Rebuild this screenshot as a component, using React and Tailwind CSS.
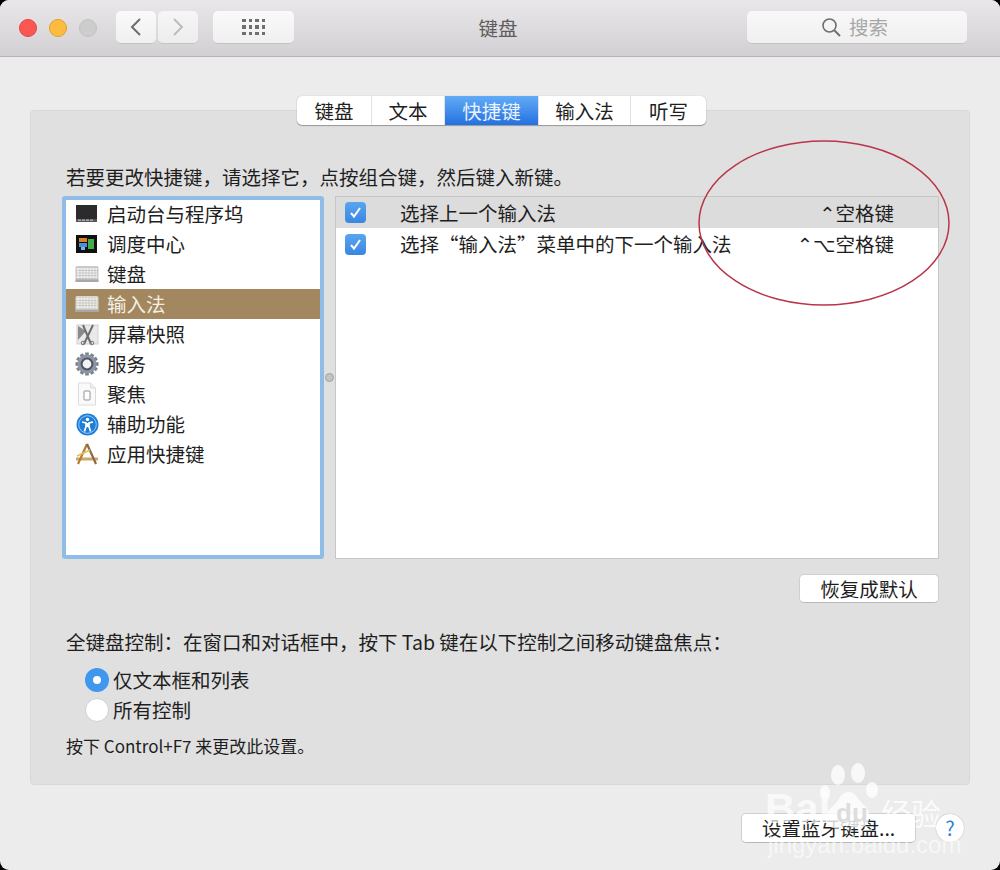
import React from "react";

const FONT = { fontFamily: '"Noto Sans CJK SC", "DejaVu Sans", sans-serif' };

function LaunchIcon() {
  return (
    <svg width="22" height="18" viewBox="0 0 22 18">
      <rect x="0" y="0" width="21" height="17" fill="#2b2b2d" />
      <rect x="0" y="14" width="21" height="3" fill="#555" />
      <path d="M2 14.5h3v1.5h-3zM6 14.5h3v1.5h-3zM10 14.5h3v1.5h-3zM14 14.5h3v1.5h-3z" fill="#aaa" />
    </svg>
  );
}

function MissionIcon() {
  return (
    <svg width="22" height="18" viewBox="0 0 22 18">
      <rect width="21" height="18" fill="#101010" />
      <rect x="3" y="3" width="8" height="4" fill="#d9822b" />
      <rect x="3" y="8" width="8" height="4" fill="#4a90d9" />
      <rect x="5" y="12" width="4" height="3" fill="#79b3e8" />
      <rect x="12" y="4" width="6" height="10" fill="#3fae49" />
    </svg>
  );
}

function KeyboardIcon({ light }) {
  return (
    <svg width="24" height="18" viewBox="0 0 24 18">
      <rect x="0.5" y="1" width="23" height="16" rx="1.5" fill={light ? "#d9d6d0" : "#c9c9c9"} />
      <rect x="2" y="3" width="20" height="10" fill={light ? "#f2f0ec" : "#f1f1f1"} />
      <path d="M2 5.5h20M2 8h20M2 10.5h20M5 3v10M8 3v10M11 3v10M14 3v10M17 3v10M20 3v10" stroke="#b5b5b5" strokeWidth="0.6" />
      <rect x="0.5" y="14.5" width="23" height="2.5" fill="#a8a8a8" />
    </svg>
  );
}

function ScreenshotIcon() {
  return (
    <svg width="23" height="23" viewBox="0 0 23 23">
      <rect x="1" y="2" width="21" height="19" fill="#e9e9e9" stroke="#cfcfcf" />
      <path d="M2 3l8 5-8 9z" fill="#8a8a8a" />
      <path d="M7 2l8 19M17 2L8 21" stroke="#6e6e6e" strokeWidth="2" />
      <circle cx="7" cy="20" r="1.8" fill="none" stroke="#777" />
      <circle cx="16" cy="20" r="1.8" fill="none" stroke="#777" />
    </svg>
  );
}

function GearIcon() {
  const teeth = [0, 30, 60, 90, 120, 150];
  return (
    <svg width="24" height="24" viewBox="0 0 24 24">
      {teeth.map((a) => (
        <rect key={a} x="10.2" y="0.5" width="3.6" height="23" fill="#77808c" transform={`rotate(${a} 12 12)`} />
      ))}
      <circle cx="12" cy="12" r="9.5" fill="#8d96a2" />
      <circle cx="12" cy="12" r="6.4" fill="#4d5560" />
      <circle cx="12" cy="12" r="4.4" fill="#f3f3f3" />
    </svg>
  );
}

function FocusIcon() {
  return (
    <svg width="20" height="24" viewBox="0 0 20 24">
      <path d="M1.5 1h12l5 5v17h-17z" fill="#fafafa" stroke="#dcdcdc" />
      <path d="M13.5 1v5h5" fill="#eee" stroke="#dcdcdc" />
      <rect x="7" y="9" width="6" height="9" rx="0.8" fill="#fff" stroke="#777" strokeWidth="0.8" />
    </svg>
  );
}

function AccessIcon() {
  return (
    <svg width="23" height="23" viewBox="0 0 23 23">
      <circle cx="11.5" cy="11.5" r="11" fill="#1c7ed6" />
      <circle cx="11.5" cy="11.5" r="8.8" fill="none" stroke="#cfe6fa" strokeWidth="0.7" />
      <circle cx="11.5" cy="6.4" r="1.7" fill="#fff" />
      <path d="M6 9l4 1v3.5l-1.6 5M17 9l-4 1v3.5l1.6 5M11.5 10v4" stroke="#fff" strokeWidth="1.7" fill="none" />
    </svg>
  );
}

function AppIcon() {
  return (
    <svg width="24" height="24" viewBox="0 0 24 24">
      <path d="M1 17h22" stroke="#c9a96a" strokeWidth="3" />
      <path d="M12 2L3 22" stroke="#b77a35" strokeWidth="2.2" />
      <path d="M12 2l9 20" stroke="#8a6a45" strokeWidth="2.2" />
      <path d="M2 14l13-6" stroke="#e0c050" strokeWidth="1.6" />
    </svg>
  );
}

const sidebarItems = [
  { label: "启动台与程序坞", icon: <LaunchIcon /> },
  { label: "调度中心", icon: <MissionIcon /> },
  { label: "键盘", icon: <KeyboardIcon /> },
  { label: "输入法", icon: <KeyboardIcon light />, selected: true },
  { label: "屏幕快照", icon: <ScreenshotIcon /> },
  { label: "服务", icon: <GearIcon /> },
  { label: "聚焦", icon: <FocusIcon /> },
  { label: "辅助功能", icon: <AccessIcon /> },
  { label: "应用快捷键", icon: <AppIcon /> },
];

const tabs = [
  { label: "键盘", w: "w-[75px]" },
  { label: "文本", w: "w-[73px]" },
  { label: "快捷键", w: "w-[94px]", active: true },
  { label: "输入法", w: "w-[92px]" },
  { label: "听写", w: "w-[75px]" },
];

function Check() {
  return (
    <span className="flex h-[21px] w-[21px] items-center justify-center rounded-[4px] bg-gradient-to-b from-[#5aa5f0] to-[#3a86e2]">
      <svg width="15" height="15" viewBox="0 0 15 15">
        <path d="M3 8l3 3.5L12 3" stroke="#fff" strokeWidth="2" fill="none" />
      </svg>
    </span>
  );
}

function ShortcutRow({ label, keys, shaded, h }) {
  return (
    <div className={`flex items-center pl-[9px] pr-[44px] ${h} ${shaded ? "bg-[#dcdcdc]" : ""}`}>
      <Check />
      <span className="ml-[34px] flex-1">{label}</span>
      <span>{keys}</span>
    </div>
  );
}

function Paw() {
  return (
    <svg width="62" height="72" viewBox="0 0 62 72" fill="#ffffff">
      <ellipse cx="18" cy="13" rx="7" ry="10" />
      <ellipse cx="38" cy="11" rx="7" ry="10" />
      <ellipse cx="5" cy="31" rx="5" ry="8" />
      <ellipse cx="52" cy="28" rx="6" ry="8" />
      <path d="M28 30c8 0 10 8 17 14 8 7 5 22-6 22-5 0-8-2-12-2s-7 3-13 2C4 65 3 52 12 45c7-5 8-15 16-15z" />
    </svg>
  );
}

export default function App() {
  return (
    <div className="h-[870px] w-[1000px] bg-black" style={FONT}>
      <div className="relative flex h-full flex-col overflow-hidden rounded-[9px] bg-[#ececec] text-[19.5px] leading-[28px] text-[#1e1e1e]">
        {/* titlebar */}
        <div className="flex h-[57px] shrink-0 items-center border-b border-[#b4b2b4] bg-gradient-to-b from-[#e9e7e9] to-[#d2d0d2] pb-[1px]">
          <div className="ml-[19px] flex gap-[12px]">
            <span className="h-[18px] w-[18px] rounded-full border border-[#e0443e] bg-[#fc5753]" />
            <span className="h-[18px] w-[18px] rounded-full border border-[#dea123] bg-[#fdbc40]" />
            <span className="h-[18px] w-[18px] rounded-full border border-[#c2c2c2] bg-[#cdcdcd]" />
          </div>
          <div className="ml-[19px] flex gap-[2px]">
            <div className="flex h-[33px] w-[40px] items-center justify-center rounded-[5px] border-b border-[#c4c2c4] bg-gradient-to-b from-[#fafafa] to-[#f0f0f0]">
              <svg width="14" height="20" viewBox="0 0 14 20">
                <path d="M11 2L3 10l8 8" stroke="#6e6e6e" strokeWidth="2" fill="none" />
              </svg>
            </div>
            <div className="flex h-[33px] w-[40px] items-center justify-center rounded-[5px] border-b border-[#c4c2c4] bg-gradient-to-b from-[#f6f6f6] to-[#ededed]">
              <svg width="14" height="20" viewBox="0 0 14 20">
                <path d="M3 2l8 8-8 8" stroke="#bcbcbc" strokeWidth="2" fill="none" />
              </svg>
            </div>
          </div>
          <div className="ml-[15px] flex h-[33px] w-[81px] items-center justify-center rounded-[5px] border-b border-[#c4c2c4] bg-gradient-to-b from-[#fafafa] to-[#f0f0f0]">
            <div className="grid grid-cols-4 gap-x-[3px] gap-y-[3px]">
              {Array.from({ length: 12 }).map((_, i) => (
                <span key={i} className="h-[3.5px] w-[3.5px] bg-[#6f6f6f]" />
              ))}
            </div>
          </div>
          <div className="ml-[184px] w-[40px] text-center text-[#5c5c5c]">键盘</div>
          <div className="ml-[229px] flex h-[33px] w-[220px] items-center rounded-[5px] border-b border-[#c4c2c4] bg-gradient-to-b from-[#f8f8f8] to-[#f0f0f0] pl-[74px]">
            <svg width="20" height="20" viewBox="0 0 20 20">
              <circle cx="8.5" cy="8.5" r="6.5" stroke="#6f6f6f" strokeWidth="1.6" fill="none" />
              <path d="M13.5 13.5L19 19" stroke="#6f6f6f" strokeWidth="2" />
            </svg>
            <span className="ml-[8px] text-[#a8a8a8]">搜索</span>
          </div>
        </div>

        {/* body */}
        <div className="flex flex-1 flex-col px-[30px] pt-[53px]">
          <div className="flex h-[675px] shrink-0 flex-col rounded-[4px] border border-[#d8d8d8] bg-[#e0e0e0] pl-[31px] pr-[30px]">
            <div className="-mt-[15px] flex justify-center pl-[2px]">
              <div className="flex h-[29px] overflow-hidden rounded-[5px] bg-white shadow-[0_1px_1px_rgba(0,0,0,0.3),0_0_1px_rgba(0,0,0,0.3)]">
                {tabs.map((t) => (
                  <div
                    key={t.label}
                    className={`flex items-center justify-center border-r border-[#e2e2e2] last:border-r-0 ${t.w} ${t.active ? "bg-gradient-to-b from-[#62abf6] to-[#2470e0] text-[#eaf3fe]" : ""}`}
                  >
                    {t.label}
                  </div>
                ))}
              </div>
            </div>

            <div className="ml-[4px] mt-[38px] h-[28px]">若要更改快捷键，请选择它，点按组合键，然后键入新键。</div>

            <div className="mt-[5px] flex h-[363px]">
              <div className="w-[262px] shrink-0 rounded-[3px] border-[4px] border-[#8fbde8] bg-white">
                <div className="-mt-[1px]">
                  {sidebarItems.map((item) => (
                    <div
                      key={item.label}
                      className={`flex h-[30px] items-center ${item.selected ? "bg-[#a3885f] text-[#f4efe6]" : ""}`}
                    >
                      <span className="flex w-[41px] shrink-0 items-center justify-center pl-[1px]">{item.icon}</span>
                      {item.label}
                    </div>
                  ))}
                </div>
              </div>
              <div className="flex w-[11px] shrink-0 items-center justify-center pt-[0px]">
                <span className="h-[9px] w-[9px] rounded-full border border-[#a0a0a0] bg-[#c4c4c4]" />
              </div>
              <div className="flex-1 border border-[#c6c6c6] bg-white">
                <ShortcutRow label="选择上一个输入法" keys="⌃空格键" shaded h="h-[31px]" />
                <div className="mt-[1px]">
                  <ShortcutRow label="选择“输入法”菜单中的下一个输入法" keys="⌃⌥空格键" h="h-[30px]" />
                </div>
              </div>
            </div>

            <div className="mt-[15px] flex justify-end">
              <div className="flex h-[29px] w-[140px] items-center justify-center rounded-[5px] border border-[#cfcfcf] border-b-[#b8b8b8] bg-white">
                恢复成默认
              </div>
            </div>

            <div className="ml-[4px] mt-[25px] h-[28px]">全键盘控制：在窗口和对话框中，按下 Tab 键在以下控制之间移动键盘焦点：</div>

            <div className="ml-[23px] mt-[9px] flex h-[30px] items-center">
              <span className="flex h-[24px] w-[24px] items-center justify-center rounded-full bg-[#3f97ee]">
                <span className="h-[8px] w-[8px] rounded-full bg-white" />
              </span>
              <span className="ml-[4px]">仅文本框和列表</span>
            </div>
            <div className="ml-[23px] flex h-[30px] items-center">
              <span className="h-[24px] w-[24px] rounded-full border border-[#cfcfcf] bg-white" />
              <span className="ml-[4px]">所有控制</span>
            </div>

            <div className="ml-[4px] mt-[7px] h-[28px] text-[17px]">按下 Control+F7 来更改此设置。</div>
          </div>

          <div className="mt-[28px] flex items-center">
            <div className="ml-[711px] flex h-[30px] w-[175px] items-center rounded-[5px] border border-[#cfcfcf] border-b-[#b8b8b8] bg-white pl-[20px]">
              设置蓝牙键盘...
            </div>
            <div className="ml-[20px] flex h-[28px] w-[28px] items-center justify-center rounded-full bg-white text-[20px] text-[#2f7fd0] shadow-[0_0_1px_rgba(0,0,0,0.4)]">
              ?
            </div>
          </div>
        </div>

        {/* annotation */}
        <svg className="absolute left-[697px] top-[138px]" width="254" height="170" viewBox="0 0 254 170">
          <ellipse cx="127" cy="85" rx="125" ry="82" fill="none" stroke="#b9354a" strokeWidth="1.5" />
        </svg>

        {/* watermark */}
        <div className="absolute left-[765px] top-[762px] h-[108px] w-[235px] text-white">
          <div className="absolute left-[55px] top-[0px] opacity-80">
            <Paw />
          </div>
          <span className="absolute left-[0px] top-[22px] text-[42px] font-bold leading-[50px] opacity-70" style={{ fontFamily: '"Liberation Sans", sans-serif' }}>
            Bai
          </span>
          <span className="absolute left-[71px] top-[36px] text-[26px] font-bold leading-[30px] text-[#dddddd]" style={{ fontFamily: '"Liberation Sans", sans-serif' }}>
            du
          </span>
          <span className="absolute left-[116px] top-[30px] text-[30px] leading-[40px] opacity-80">经验</span>
          <span className="absolute left-[3px] top-[68px] text-[24px] leading-[30px] opacity-60" style={{ fontFamily: '"Liberation Sans", sans-serif' }}>
            jingyan.baidu.com
          </span>
        </div>
      </div>
    </div>
  );
}
